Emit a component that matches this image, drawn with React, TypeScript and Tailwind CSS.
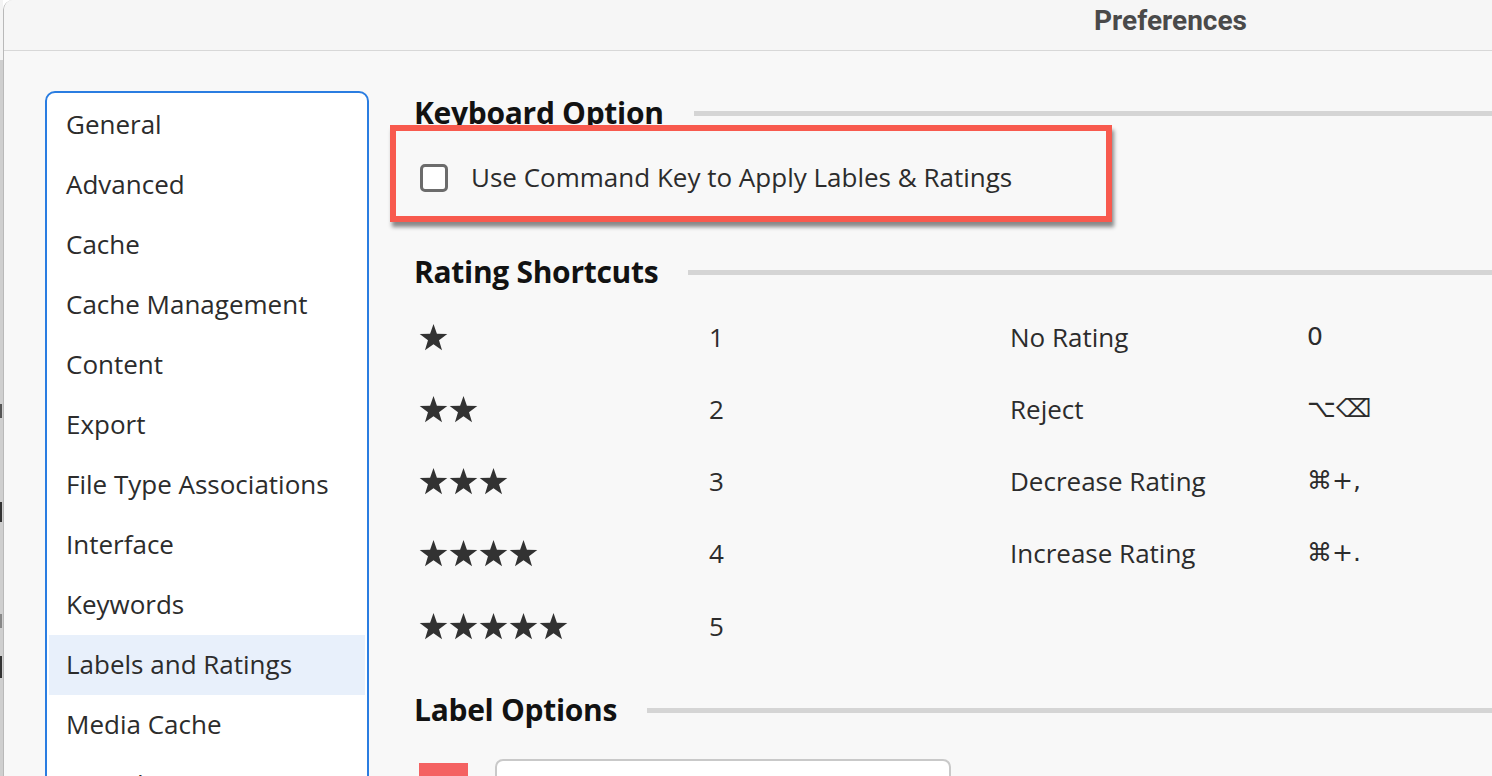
import React from "react";

const body = { fontFamily: '"Open Sans", Lato, sans-serif' };
const title = { fontFamily: 'Roboto, "Liberation Sans", sans-serif' };

function Star() {
  return (
    <svg width="29" height="29" viewBox="0 0 30 30" className="block">
      <polygon
        points="15,1 18.53,11.15 29.27,11.36 20.71,17.85 23.82,28.14 15,22 6.18,28.14 9.29,17.85 0.73,11.36 11.47,11.15"
        fill="#323232"
      />
    </svg>
  );
}

function Stars({ n }: { n: number }) {
  return (
    <div className="flex gap-[1px]">
      {Array.from({ length: n }).map((_, i) => (
        <Star key={i} />
      ))}
    </div>
  );
}

function Heading({ text }: { text: string }) {
  return (
    <div className="flex items-center h-[34px]">
      <div className="text-[30px] font-bold text-[#121212] leading-[34px] whitespace-nowrap tracking-[-0.3px]">{text}</div>
      <div className="ml-[30px] flex-1 h-[5px] bg-[#d5d5d5]" />
    </div>
  );
}

const items = [
  "General",
  "Advanced",
  "Cache",
  "Cache Management",
  "Content",
  "Export",
  "File Type Associations",
  "Interface",
  "Keywords",
  "Labels and Ratings",
  "Media Cache",
  "Metadata",
];

const left = [
  { n: 1, k: "1", label: "No Rating", v: "0" },
  { n: 2, k: "2", label: "Reject", v: "⌥⌫" },
  { n: 3, k: "3", label: "Decrease Rating", v: "⌘+," },
  { n: 4, k: "4", label: "Increase Rating", v: "⌘+." },
  { n: 5, k: "5", label: "", v: "" },
];

export default function App() {
  return (
    <div className="w-[1492px] h-[776px] overflow-hidden flex bg-white" style={body}>
      {/* background window sliver */}
      <div className="w-[3px] shrink-0 bg-[#cfcfcf] flex flex-col">
        <div className="h-[60px] bg-[#f4f4f4]" />
        <div className="mt-[344px] h-[14px] w-[2px] bg-[#555]" />
        <div className="mt-[84px] h-[20px] w-[2px] bg-[#333]" />
        <div className="mt-[92px] h-[14px] w-[2px] bg-[#888]" />
        <div className="mt-[28px] h-[22px] w-[2px] bg-[#333]" />
      </div>
      {/* window */}
      <div className="w-[2334px] shrink-0 rounded-tl-[10px] border-l border-[#b9b9b9] bg-[#f8f8f8] flex flex-col overflow-hidden">
        <div className="h-[51px] shrink-0 bg-[#f6f6f6] border-b border-[#d8d8d8] flex justify-center items-start pt-[4px]">
          <div className="text-[28px] font-bold text-[#4a4a4a] leading-[34px]" style={title}>
            Preferences
          </div>
        </div>
        <div className="flex items-start">
          {/* sidebar */}
          <div className="ml-[41px] mt-[40px] w-[324px] shrink-0 h-[720px] border-2 border-[#2a7de1] rounded-[10px] bg-white p-[2px]">
            {items.map((it) => (
              <div
                key={it}
                className={
                  "h-[60px] flex items-center pl-[17px] pb-[1px] text-[26px] text-[#2c2c2c] whitespace-nowrap " +
                  (it === "Labels and Ratings" ? "bg-[#e8f0fb]" : "")
                }
              >
                {it}
              </div>
            ))}
          </div>
          {/* main */}
          <div className="ml-[45px] pt-[45px] w-[1900px] flex flex-col">
            <Heading text="Keyboard Option" />
            <div className="-mt-[5px] -ml-[24px] w-[722px] h-[97px] border-[6px] border-[#f85a4e] shadow-[2px_5px_4px_rgba(0,0,0,0.45)] flex items-center pl-[24px] pt-[8px]">
              <div className="w-[28px] h-[28px] border-[3px] border-[#6c6c6c] rounded-[5px] bg-white shrink-0" />
              <div className="ml-[23px] text-[26px] text-[#2c2c2c] whitespace-nowrap">
                Use Command Key to Apply Lables &amp; Ratings
              </div>
            </div>
            <div className="mt-[33px]">
              <Heading text="Rating Shortcuts" />
            </div>
            <div className="mt-[12px] ml-[5px] grid grid-cols-[290px_301px_297px_200px]">
              {left.map((r, i) => (
                <React.Fragment key={i}>
                  <div className={(i === 4 ? "h-[74px]" : "h-[72px]") + " flex items-center"}>
                    <Stars n={r.n} />
                  </div>
                  <div className="flex items-center text-[26px] text-[#2c2c2c]">{r.k}</div>
                  <div className="flex items-center text-[26px] text-[#2c2c2c] whitespace-nowrap">{r.label}</div>
                  <div
                    className="flex items-center text-[#2c2c2c] whitespace-nowrap"
                    style={{ fontFamily: '"DejaVu Sans", "Open Sans", sans-serif', fontSize: 25 }}
                  >
                    {r.v}
                  </div>
                </React.Fragment>
              ))}
            </div>
            <div className="mt-[30px]">
              <Heading text="Label Options" />
            </div>
            <div className="mt-[32px] ml-[5px] flex items-start">
              <div className="mt-[4px] w-[49px] h-[40px] bg-[#f46262] shrink-0" />
              <div className="ml-[27px] w-[456px] h-[40px] border-2 border-[#c9c9c9] rounded-[8px] bg-white pl-[12px] pt-[6px] text-[26px] text-[#2c2c2c]">
                Select
              </div>
            </div>
          </div>
        </div>
      </div>
    </div>
  );
}
